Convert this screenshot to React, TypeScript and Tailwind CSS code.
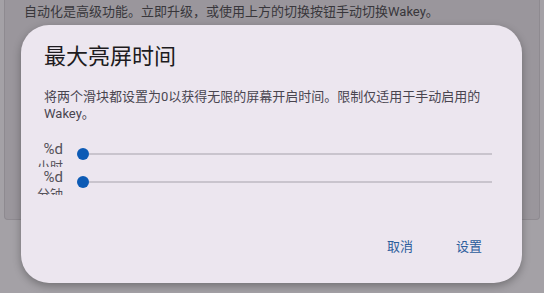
import React from "react";

const font = { fontFamily: '"Roboto", "Noto Sans CJK SC", sans-serif' };

function SliderRow({ unit }: { unit: string }) {
  return (
    <div className="flex items-start h-[28px]">
      <div className="w-[31px] h-[27px] overflow-hidden flex flex-col items-end text-[#55525a] leading-none whitespace-nowrap">
        <span className="text-[15px] mt-[2px]">%d</span>
        <span className="text-[13px] mt-[3px]">{unit}</span>
      </div>
      <div className="flex-1 flex items-center h-[12px] mt-[8px] ml-[14px]">
        <div className="w-[12px] h-[12px] rounded-full bg-[#0d5bb5] shrink-0" />
        <div className="flex-1 h-[2px] bg-[#c9c4cd]" />
      </div>
    </div>
  );
}

export default function App() {
  return (
    <div className="relative w-[544px] h-[293px] overflow-hidden bg-[#a4a1a6]" style={font}>
      <div className="ml-[4px] mr-[4px] h-[220px] bg-[#9a969c] border border-[#8e8a90] border-t-0 rounded-b-[4px] px-[19px] pt-[3px]">
        <p className="text-[13px] leading-[18px] text-[#38363b]">
          自动化是高级功能。立即升级，或使用上方的切换按钮手动切换Wakey。
        </p>
      </div>

      <div className="absolute left-[21px] top-[25px] w-[501px] h-[258px] rounded-[28px] bg-[#ece6ef] shadow-[0_3px_8px_rgba(0,0,0,0.3)] flex flex-col pl-[23px] pr-[30px]">
        <h1 className="text-[22px] leading-[28px] text-[#1d1b20] mt-[18px]">最大亮屏时间</h1>
        <p className="text-[13px] leading-[17px] text-[#49454f] mt-[17px]">
          将两个滑块都设置为0以获得无限的屏幕开启时间。限制仅适用于手动启用的Wakey。
        </p>
        <div className="mt-[18px] -ml-[12px] flex flex-col">
          <SliderRow unit="小时" />
          <SliderRow unit="分钟" />
        </div>
        <div className="mt-auto mb-[27px] flex justify-end gap-[43px] pr-[10px] text-[13px] text-[#2c5d9c]">
          <span>取消</span>
          <span>设置</span>
        </div>
      </div>
    </div>
  );
}
